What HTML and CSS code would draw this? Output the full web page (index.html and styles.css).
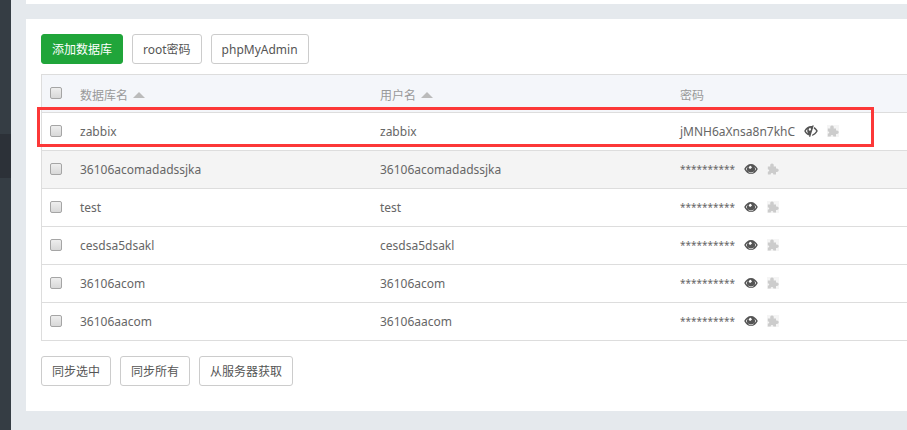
FILE: index.html
```html
<!DOCTYPE html>
<html lang="zh-CN">
<head>
  <meta charset="UTF-8">
  <meta name="viewport" content="width=device-width, initial-scale=1.0">
  <title>数据库</title>
  <link rel="stylesheet" href="styles.css">
</head>
<body>
  <svg class="sprite" aria-hidden="true">
    <symbol id="eye" viewBox="0 0 14 12">
      <path fill-rule="evenodd" d="M.2 6C1.600 3 4.200 1 7 1S12.400 3 13.800 6C12.400 9 9.800 11 7 11S1.600 9 .2 6ZM1.900 6C3.100 8.200 4.900 9.500 7 9.500S10.900 8.200 12.100 6C11.600 5 10.900 4.200 10.300 3.700A4 4 0 1 1 3.700 3.700C3.100 4.200 2.400 5 1.900 6ZM4.700 4.900L6.200 6.100L8 4.500L6.800 2.800C5.600 2.900 4.800 3.800 4.700 4.900Z"/>
    </symbol>
    <symbol id="eye-off" viewBox="0 0 14 12">
      <path fill-rule="evenodd" d="M8.600.2L9.800.6L6.200 11.900L5 11.500L5.300 10.600C3.200 10 1.300 8.400.2 6C1.700 2.800 4.500 1 7 1C7.500 1 7.900 1 8.300 1.100ZM3.400 4.300C2.700 4.800 2.200 5.400 1.800 6C2.500 7.200 3.200 8 4.100 8.500C3.300 7.400 3 5.800 3.400 4.300ZM4.700 4.900L6 6L7.100 4.400L6.400 2.800C5.400 3.100 4.800 3.800 4.700 4.900Z"/>
      <path d="M10.300 1.900C11.800 2.700 13 4.200 13.800 6C12.500 8.700 10.300 10.500 7.900 10.900L8.500 9.200C10.100 8.700 11.300 7.600 12.200 6C11.600 5 10.900 4.200 9.700 3.500Z"/>
    </symbol>
    <symbol id="puzzle" viewBox="0 0 12 12">
      <path d="M.8 3.500H3.300C3 1.800 3.500.5 5 .5S7 1.800 6.700 3.500H9V5.600C10.600 5.200 11.700 6 11.700 7.300S10.600 9.300 9 8.900V11.500H6.300C6.300 10.500 5.800 10 5 10S3.700 10.500 3.700 11.500H.8V8.700C1.700 8.600 2.200 8.200 2.200 7.500S1.700 6.400.8 6.300Z"/>
    </symbol>
  </svg>

  <aside class="sidebar">
    <div class="sidebar-active"></div>
  </aside>

  <main class="main">
    <div class="panel panel-top"></div>

    <div class="panel panel-content">
      <div class="toolbar">
        <button type="button" class="btn btn-success">添加数据库</button>
        <button type="button" class="btn">root密码</button>
        <button type="button" class="btn">phpMyAdmin</button>
      </div>

      <div class="table-wrap">
        <table class="table">
          <colgroup>
            <col class="col-check">
            <col class="col-name">
            <col class="col-user">
            <col>
          </colgroup>
          <thead>
            <tr>
              <th><input type="checkbox" aria-label="全选"></th>
              <th><span class="th-text">数据库名<i class="sort"></i></span></th>
              <th><span class="th-text">用户名<i class="sort"></i></span></th>
              <th><span class="th-text">密码</span></th>
            </tr>
          </thead>
          <tbody>
            <tr>
              <td><input type="checkbox" aria-label="zabbix"></td>
              <td>zabbix</td>
              <td>zabbix</td>
              <td>
                <div class="password">
                  <span>jMNH6aXnsa8n7khC</span>
                  <svg class="eye"><use href="#eye-off"/></svg>
                  <svg class="puzzle"><use href="#puzzle"/></svg>
                </div>
              </td>
            </tr>
            <tr class="hover">
              <td><input type="checkbox" aria-label="36106acomadadssjka"></td>
              <td>36106acomadadssjka</td>
              <td>36106acomadadssjka</td>
              <td>
                <div class="password">
                  <span class="masked">**********</span>
                  <svg class="eye"><use href="#eye"/></svg>
                  <svg class="puzzle"><use href="#puzzle"/></svg>
                </div>
              </td>
            </tr>
            <tr>
              <td><input type="checkbox" aria-label="test"></td>
              <td>test</td>
              <td>test</td>
              <td>
                <div class="password">
                  <span class="masked">**********</span>
                  <svg class="eye"><use href="#eye"/></svg>
                  <svg class="puzzle"><use href="#puzzle"/></svg>
                </div>
              </td>
            </tr>
            <tr>
              <td><input type="checkbox" aria-label="cesdsa5dsakl"></td>
              <td>cesdsa5dsakl</td>
              <td>cesdsa5dsakl</td>
              <td>
                <div class="password">
                  <span class="masked">**********</span>
                  <svg class="eye"><use href="#eye"/></svg>
                  <svg class="puzzle"><use href="#puzzle"/></svg>
                </div>
              </td>
            </tr>
            <tr>
              <td><input type="checkbox" aria-label="36106acom"></td>
              <td>36106acom</td>
              <td>36106acom</td>
              <td>
                <div class="password">
                  <span class="masked">**********</span>
                  <svg class="eye"><use href="#eye"/></svg>
                  <svg class="puzzle"><use href="#puzzle"/></svg>
                </div>
              </td>
            </tr>
            <tr>
              <td><input type="checkbox" aria-label="36106aacom"></td>
              <td>36106aacom</td>
              <td>36106aacom</td>
              <td>
                <div class="password">
                  <span class="masked">**********</span>
                  <svg class="eye"><use href="#eye"/></svg>
                  <svg class="puzzle"><use href="#puzzle"/></svg>
                </div>
              </td>
            </tr>
          </tbody>
        </table>
        <div class="highlight"></div>
      </div>

      <div class="toolbar">
        <button type="button" class="btn">同步选中</button>
        <button type="button" class="btn">同步所有</button>
        <button type="button" class="btn">从服务器获取</button>
      </div>
    </div>
  </main>
</body>
</html>
```
FILE: styles.css
```css
* {
  box-sizing: border-box;
  margin: 0;
  padding: 0;
}

body {
  display: flex;
  min-height: 100vh;
  background: #e5e9ed;
  color: #666;
  font-family: "Noto Sans", "Noto Sans CJK SC", sans-serif;
  font-size: 12px;
  line-height: 18px;
}

.sprite {
  position: absolute;
  width: 0;
  height: 0;
}

.sidebar {
  flex: 0 0 11px;
  padding-top: 134px;
  background: #353d44;
}

.sidebar-active {
  height: 44px;
  background: #2c3138;
}

.main {
  flex: 1;
  min-width: 0;
  padding-left: 15px;
}

.panel {
  background: #fff;
}

.panel-top {
  height: 4px;
  margin-bottom: 15px;
}

.panel-content {
  padding: 15px 0 25px 15px;
}

.toolbar {
  display: flex;
  gap: 9px;
}

.btn {
  height: 30px;
  padding: 2px 10px 0;
  border: 1px solid #ccc;
  border-radius: 3px;
  background: #fff;
  color: #555;
  font: inherit;
  white-space: nowrap;
  cursor: pointer;
}

.btn-success {
  border-color: #20a53a;
  background: #20a53a;
  color: #fff;
}

.table-wrap {
  position: relative;
  margin: 10px 0 15px;
}

.table {
  width: 100%;
  table-layout: fixed;
  border: 1px solid #ddd;
  border-width: 1px 0 0 1px;
  border-spacing: 0;
}

.col-check {
  width: 30px;
}

.col-name,
.col-user {
  width: 300px;
}

.table th,
.table td {
  height: 38px;
  padding: 0 0 0 8px;
  border-bottom: 1px solid #ddd;
  text-align: left;
  vertical-align: middle;
  white-space: nowrap;
}

.table th {
  background: #f4f6fa;
  color: #999;
  font-weight: normal;
}

.table .hover td {
  background: #f4f4f4;
}

.table input {
  display: block;
  appearance: none;
  width: 12px;
  height: 12px;
  margin-bottom: 2px;
  border: 1px solid #a5a5a5;
  border-radius: 2px;
  background: linear-gradient(#eee, #d8d8d8);
}

.th-text {
  display: flex;
  align-items: center;
  padding-top: 5px;
}

.sort {
  margin: 0 0 2px 5px;
  border: 6px solid transparent;
  border-top: 0;
  border-bottom-color: #bbb;
}

.password {
  display: flex;
  align-items: center;
}

.masked {
  padding-bottom: 2px;
  font-size: 10px;
}

.eye {
  width: 14px;
  height: 12px;
  margin: 0 9px 2px;
  fill: #555;
}

.puzzle {
  width: 12px;
  height: 12px;
  margin-bottom: 2px;
  background: #f5f5f5;
  fill: #ccc;
}

/* red frame around the new database row */
.highlight {
  position: absolute;
  top: 33px;
  left: -4px;
  width: 837px;
  height: 40px;
  border: 3px solid #fc3838;
}
```
